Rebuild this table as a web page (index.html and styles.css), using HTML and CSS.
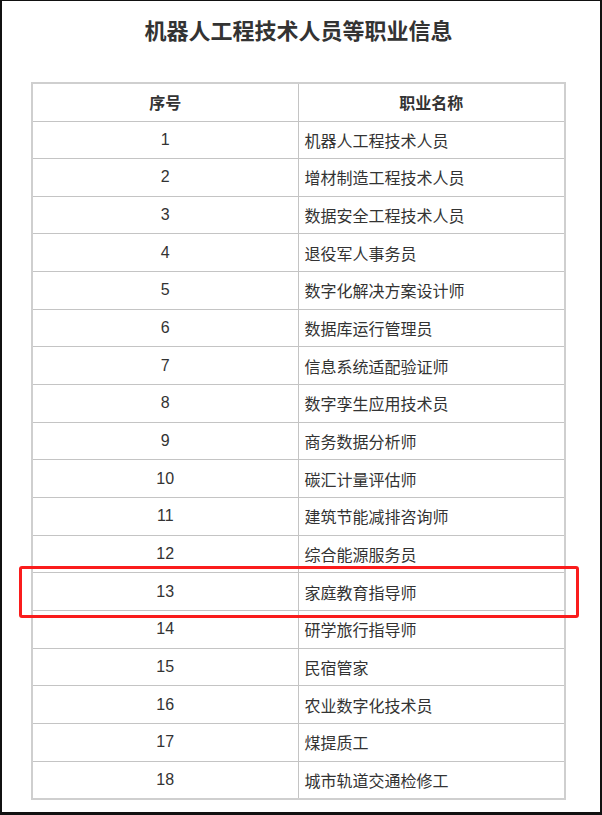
FILE: index.html
```html
<!DOCTYPE html>
<html lang="zh-CN">
<head>
<meta charset="utf-8">
<title>机器人工程技术人员等职业信息</title>
<link rel="stylesheet" href="styles.css">
</head>
<body>
<div class="page">
  <h1 class="title">机器人工程技术人员等职业信息</h1>
  <div class="table-wrap">
    <table class="jobs">
      <thead>
        <tr><th class="num">序号</th><th>职业名称</th></tr>
      </thead>
      <tbody>
        <tr><td class="num">1</td><td class="name">机器人工程技术人员</td></tr>
        <tr><td class="num">2</td><td class="name">增材制造工程技术人员</td></tr>
        <tr><td class="num">3</td><td class="name">数据安全工程技术人员</td></tr>
        <tr><td class="num">4</td><td class="name">退役军人事务员</td></tr>
        <tr><td class="num">5</td><td class="name">数字化解决方案设计师</td></tr>
        <tr><td class="num">6</td><td class="name">数据库运行管理员</td></tr>
        <tr><td class="num">7</td><td class="name">信息系统适配验证师</td></tr>
        <tr><td class="num">8</td><td class="name">数字孪生应用技术员</td></tr>
        <tr><td class="num">9</td><td class="name">商务数据分析师</td></tr>
        <tr><td class="num">10</td><td class="name">碳汇计量评估师</td></tr>
        <tr><td class="num">11</td><td class="name">建筑节能减排咨询师</td></tr>
        <tr><td class="num">12</td><td class="name">综合能源服务员</td></tr>
        <tr><td class="num">13</td><td class="name">家庭教育指导师</td></tr>
        <tr><td class="num">14</td><td class="name">研学旅行指导师</td></tr>
        <tr><td class="num">15</td><td class="name">民宿管家</td></tr>
        <tr><td class="num">16</td><td class="name">农业数字化技术员</td></tr>
        <tr><td class="num">17</td><td class="name">煤提质工</td></tr>
        <tr><td class="num">18</td><td class="name">城市轨道交通检修工</td></tr>
      </tbody>
    </table>
    <div class="highlight"></div>
  </div>
</div>
</body>
</html>
```
FILE: styles.css
```css
* { box-sizing: border-box; }
html, body { margin: 0; padding: 0; background: #fff; }
body {
  font-family: "Liberation Sans", "Noto Sans CJK SC", sans-serif;
  color: #333;
}
.page {
  width: 602px;
  height: 815px;
  border-style: solid;
  border-color: #111;
  border-width: 1px 2px 3px 2px;
  padding: 0 34px 0 29px;
  background: #fff;
}
.title {
  margin: 0;
  height: 81px;
  padding-top: 12px;
  font-family: "Noto Sans CJK SC", sans-serif;
  font-size: 22px;
  font-weight: 700;
  line-height: 32px;
  text-align: center;
  color: #333;
}
.table-wrap {
  position: relative;
}
.jobs {
  width: 535px;
  border-collapse: collapse;
  border: 2px solid #cfcfcf;
  font-size: 16px;
}
.jobs th, .jobs td {
  border: 1px solid #c4c4c4;
  height: 37.67px;
  padding: 0 6px;
  vertical-align: middle;
  line-height: 20px;
}
.jobs th {
  height: 38px;
  font-family: "Noto Sans CJK SC", sans-serif;
  font-weight: 700;
  text-align: center;
  color: #333;
}
.jobs .num {
  width: 266px;
  text-align: center;
}
.jobs td.name {
  text-align: left;
  font-family: "Noto Sans CJK SC", sans-serif;
}
.highlight {
  position: absolute;
  left: -12px;
  top: 484px;
  width: 560px;
  height: 52px;
  border: 3px solid #fa1c1c;
  border-radius: 3px;
  pointer-events: none;
}
```
